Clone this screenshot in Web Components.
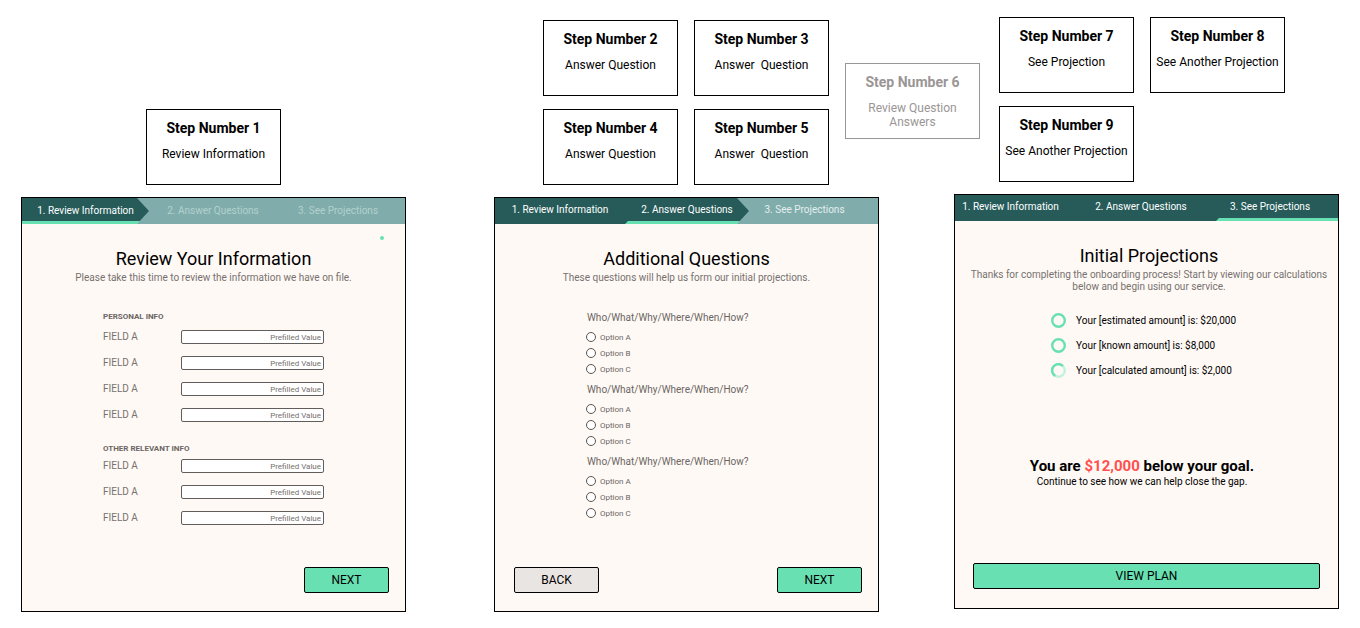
<!DOCTYPE html>
<html lang="en">
<head>
<meta charset="utf-8">
<title>Onboarding flow</title>
<style>
  body { margin: 0; background: #fff; color: #000; font-family: Roboto, "Liberation Sans", sans-serif; }
</style>
</head>
<body>
<flow-board></flow-board>
<script>
  const define = (name, html, setup) => customElements.define(name, class extends HTMLElement {
    connectedCallback() {
      if (this.shadowRoot) return;
      const t = document.createElement('template');
      t.innerHTML = html;
      this.attachShadow({ mode: 'open' }).append(t.content.cloneNode(true));
      if (setup) setup(this, this.shadowRoot);
    }
  });

  // A step of the flow: a title with a short description.
  define('step-card', `
    <style>
      :host { display: block; box-sizing: border-box; height: 76px; border: 1px solid #000; padding: 10px 0 0; text-align: center; background: #fff; }
      :host([skipped]) { border-color: #9a9695; color: #9a9695; }
      h2 { margin: 0 0 11px; font-size: 14px; line-height: 16px; font-weight: 700; }
      p { margin: 0 auto; font-size: 12px; line-height: 14px; white-space: pre-wrap; }
      :host([skipped]) p { width: 100px; }
    </style>
    <h2><slot name="title"></slot></h2><p><slot></slot></p>`);

  define('step-grid', `
    <style>
      :host { display: grid; grid-template-columns: 135px 135px; gap: 13px 16px; }
    </style>
    <slot></slot>`);

  // Progress tabs; "current" is the number of the open stage.
  define('stage-tabs', `
    <style>
      :host { display: block; }
      ol { list-style: none; margin: 0; padding: 0; display: grid; grid-template-columns: 127fr 128fr 128fr; height: 26px; background: #265b59; }
      li { display: flex; box-sizing: border-box; text-align: center; }
      a { flex: 1; color: #fff; text-decoration: none; font-size: 10px; line-height: 24px; white-space: nowrap; }
      .current { background: linear-gradient(#265b59 23px, #68e0b2 23px); }
      :host([current="1"]) ol { background: #80adab; }
      :host([current="1"]) .current { clip-path: polygon(0 0, calc(100% - 12px) 0, 100% 50%, calc(100% - 12px) 100%, 0 100%); }
      :host([current="1"]) a { line-height: 26px; }
      :host([current="1"]) li:not(.current) a { color: #b3d0ce; }
      :host([current="1"]) li:last-child { padding-right: 6px; }
      :host([current="2"]) ol { grid-template-columns: 130fr 124fr 129fr; background: linear-gradient(90deg, #265b59 50%, #80adab 50%); }
      :host([current="2"]) .current { clip-path: polygon(0 100%, 3px 23px, 3px 0, calc(100% - 12px) 0, 100% 50%, calc(100% - 12px) 100%); }
      :host([current="2"]) li:last-child { padding-right: 18px; }
      :host([current="2"]) li:last-child a { color: #e3eeee; }
      :host([current="3"]) ol { grid-template-columns: 111fr 150fr 122fr; }
      :host([current="3"]) .current { clip-path: polygon(0 100%, 3px 23px, 3px 0, 100% 0, 100% 100%); padding-right: 14px; }
    </style>
    <nav aria-label="Progress"><ol>
      <li><a href="#review">1. Review Information</a></li>
      <li><a href="#answer">2. Answer Questions</a></li>
      <li><a href="#projections">3. See Projections</a></li>
    </ol></nav>`, (host, root) => {
      const li = root.querySelectorAll('li')[host.getAttribute('current') - 1];
      li.className = 'current';
      li.firstElementChild.setAttribute('aria-current', 'step');
    });

  // One screen of the app: tabs, heading, content and a row of buttons.
  define('app-screen', `
    <style>
      :host { display: flex; flex-direction: column; box-sizing: border-box; min-height: 415px; border: 1px solid #000; background: #fff9f5; position: relative; }
      header { padding: var(--header-padding, 23px 14px 0); text-align: center; }
      h1 { margin: 0; font-size: 18px; line-height: 24px; font-weight: 400; }
      header p { margin: 1px 0 0; font-size: 10px; line-height: 12px; color: #76716f; }
      footer { display: flex; justify-content: space-between; margin-top: auto; padding: var(--footer-padding, 0 16px 18px 19px); }
    </style>
    <slot name="tabs"></slot>
    <header><h1><slot name="title"></slot></h1><p><slot name="intro"></slot></p></header>
    <slot></slot>
    <footer><slot name="actions"></slot></footer>`);

  define('app-button', `
    <style>
      :host { display: block; width: 85px; }
      :host([wide]) { width: 100%; }
      :host([end]) { margin-left: auto; }
      button { display: block; width: 100%; height: 26px; padding: 0; border: 1px solid #000; border-radius: 2px; background: #68e0b2; color: #000; font: 400 12px/24px Roboto, "Liberation Sans", sans-serif; }
      :host([plain]) button { background: #e9e5e3; }
    </style>
    <button type="button"><slot></slot></button>`);

  define('info-group', `
    <style>
      :host { display: block; width: 221px; margin: 28px 0 0 81px; }
      :host([tight]) { margin-top: 22px; }
      h2 { margin: 0 0 8px; font-size: 8px; line-height: 10px; font-weight: 700; color: #6b6664; }
      :host([tight]) h2 { margin-bottom: 5px; }
      div { display: grid; gap: 12px; }
    </style>
    <h2><slot name="title"></slot></h2><div><slot></slot></div>`);

  define('info-field', `
    <style>
      :host { display: flex; justify-content: space-between; height: 14px; }
      label { font-size: 10px; line-height: 13px; color: #76716f; }
      input { box-sizing: border-box; width: 143px; height: 14px; padding: 1px 2px 0; border: 1px solid #625d5b; border-radius: 2px; background: #fff; text-align: right; font: 400 8px/10px Roboto, "Liberation Sans", sans-serif; color: #76716f; }
    </style>
    <label for="value">FIELD A</label><input id="value" type="text" value="Prefilled Value">`);

  define('question-group', `
    <style>
      :host { display: block; margin: 0 0 7px 91px; color: #6b6664; }
      fieldset { margin: 0; padding: 0; border: 0; min-width: 0; }
      legend { padding: 0 0 5px 1px; font-size: 10px; line-height: 12px; }
      label { display: flex; align-items: center; gap: 4px; height: 16px; font-size: 8px; }
      input { appearance: none; box-sizing: border-box; width: 10px; height: 10px; margin: 0; border: 1px solid #5a5553; border-radius: 50%; background: #fff; }
      input:checked { background: radial-gradient(#5a5553 40%, #fff 50%); }
    </style>
    <fieldset>
      <legend>Who/What/Why/Where/When/How?</legend>
      <label><input type="radio" name="option">Option A</label>
      <label><input type="radio" name="option">Option B</label>
      <label><input type="radio" name="option">Option C</label>
    </fieldset>`);

  define('result-line', `
    <style>
      :host { display: flex; align-items: center; gap: 10px; height: 25px; font-size: 10px; line-height: 12px; }
      svg { width: 15px; height: 15px; fill: none; stroke: #68e0b2; stroke-width: 2.4; }
      .arc { display: none; }
      :host([busy]) .ring { stroke: #c3f1df; }
      :host([busy]) .arc { display: inline; }
    </style>
    <svg viewBox="0 0 15 15" aria-hidden="true">
      <circle class="ring" cx="7.5" cy="7.5" r="6.3"/>
      <path class="arc" d="M4.3 12.9A6.3 6.3 0 1 1 11.9 3"/>
    </svg>
    <span><slot></slot></span>`);

  define('flow-board', `
    <style>
      :host { display: block; padding: 17px 21px; }
      .steps { display: grid; grid-template-columns: 125fr 135px 262fr 286px 16px 135px 19fr 286px 54fr; align-items: end; margin-bottom: 9px; }
      .s1 { grid-column: 2; } .s2 { grid-column: 4; }
      .s6 { grid-column: 6; align-self: center; }
      .s7 { grid-column: 8; margin-bottom: 3px; }
      .screens { display: grid; grid-template-columns: minmax(0, 385fr) minmax(0, 88fr) minmax(0, 385fr) minmax(0, 75fr) minmax(0, 385fr); align-items: start; }
      .a { grid-column: 1; margin-top: 3px; }
      .b { grid-column: 3; margin-top: 3px; }
      .c { grid-column: 5; --header-padding: 23px 5px 0 10px; --footer-padding: 0 18px 19px; }
      .dot { position: absolute; top: 38px; right: 21px; width: 4px; height: 4px; border-radius: 50%; background: #68e0b2; }
      .questions { margin-top: 28px; }
      .results { margin: 15px 0 0 96px; }
      .goal { margin: 74px 9px 0 0; text-align: center; }
      .goal h2 { margin: 0; font-size: 15px; line-height: 18px; }
      .goal em { font-style: normal; color: #ff4f4f; }
      .goal p { margin: 1px 0 0; font-size: 10px; line-height: 12px; }
    </style>
    <div class="steps">
      <step-card class="s1"><span slot="title">Step Number 1</span>Review Information</step-card>
      <step-grid class="s2">
        <step-card><span slot="title">Step Number 2</span>Answer Question</step-card>
        <step-card><span slot="title">Step Number 3</span>Answer  Question</step-card>
        <step-card><span slot="title">Step Number 4</span>Answer Question</step-card>
        <step-card><span slot="title">Step Number 5</span>Answer  Question</step-card>
      </step-grid>
      <step-card class="s6" skipped><span slot="title">Step Number 6</span>Review Question Answers</step-card>
      <step-grid class="s7">
        <step-card><span slot="title">Step Number 7</span>See Projection</step-card>
        <step-card><span slot="title">Step Number 8</span>See Another Projection</step-card>
        <step-card><span slot="title">Step Number 9</span>See Another Projection</step-card>
      </step-grid>
    </div>
    <div class="screens">
      <app-screen class="a" id="review">
        <stage-tabs slot="tabs" current="1"></stage-tabs>
        <span slot="title">Review Your Information</span>
        <span slot="intro">Please take this time to review the information we have on file.</span>
        <span class="dot"></span>
        <info-group><span slot="title">PERSONAL INFO</span>
          <info-field></info-field><info-field></info-field><info-field></info-field><info-field></info-field>
        </info-group>
        <info-group tight><span slot="title">OTHER RELEVANT INFO</span>
          <info-field></info-field><info-field></info-field><info-field></info-field>
        </info-group>
        <app-button slot="actions" end>NEXT</app-button>
      </app-screen>
      <app-screen class="b" id="answer">
        <stage-tabs slot="tabs" current="2"></stage-tabs>
        <span slot="title">Additional Questions</span>
        <span slot="intro">These questions will help us form our initial projections.</span>
        <div class="questions">
          <question-group></question-group><question-group></question-group><question-group></question-group>
        </div>
        <app-button slot="actions" plain>BACK</app-button>
        <app-button slot="actions">NEXT</app-button>
      </app-screen>
      <app-screen class="c" id="projections">
        <stage-tabs slot="tabs" current="3"></stage-tabs>
        <span slot="title">Initial Projections</span>
        <span slot="intro">Thanks for completing the onboarding process! Start by viewing our calculations below and begin using our service.</span>
        <div class="results">
          <result-line>Your [estimated amount] is: $20,000</result-line>
          <result-line>Your [known amount] is: $8,000</result-line>
          <result-line busy>Your [calculated amount] is: $2,000</result-line>
        </div>
        <div class="goal">
          <h2>You are <em>$12,000</em> below your goal.</h2>
          <p>Continue to see how we can help close the gap.</p>
        </div>
        <app-button slot="actions" wide>VIEW PLAN</app-button>
      </app-screen>
    </div>`);
</script>
</body>
</html>
